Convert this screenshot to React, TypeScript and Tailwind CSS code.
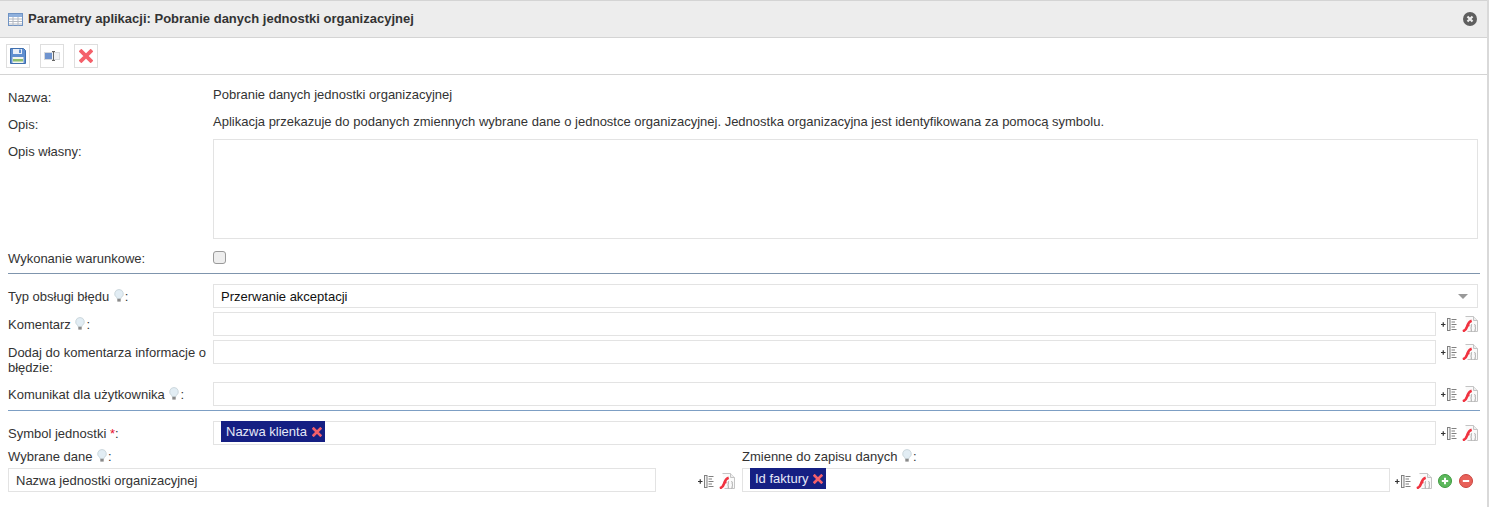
import type { ReactNode } from "react";

function TableIcon() {
  return (
    <svg width="15" height="13" viewBox="0 0 15 13">
      <rect x="0.5" y="0.5" width="14" height="12" fill="#fff" stroke="#6f93c4" />
      <rect x="1" y="1" width="13" height="3" fill="#8fb0dc" />
      <path d="M1 6h13M1 8.500h13M1 11h13M5 4v8.500M10 4v8.500" stroke="#b4b9c2" strokeWidth="1" />
    </svg>
  );
}

function SaveIcon() {
  return (
    <svg width="16" height="16" viewBox="0 0 16 16">
      <path d="M0.500 0.500h13l2 2v13h-15z" fill="#5f8fd0" stroke="#3f6fae" />
      <rect x="3" y="1" width="9" height="5" fill="#e9eff8" />
      <rect x="9" y="1.500" width="2" height="3.500" fill="#5f8fd0" />
      <rect x="2.500" y="9" width="11" height="6" fill="#f3f6ee" />
      <rect x="3" y="11" width="10" height="2.500" fill="#8cbd6e" />
    </svg>
  );
}

function FieldIcon() {
  return (
    <svg width="16" height="12" viewBox="0 0 16 12">
      <rect x="0.500" y="2.500" width="15" height="7" fill="#f0f2f4" stroke="#d6d9dc" />
      <rect x="1" y="3" width="7" height="6" fill="#6f94cf" />
      <path d="M8 1.500h3M9.500 1.500v9M8 10.500h3" stroke="#666" fill="none" />
    </svg>
  );
}

function RedCross({ size }: { size: number }) {
  return (
    <svg width={size} height={size} viewBox="0 0 12 12">
      <path d="M2 2l8 8M10 2l-8 8" stroke="#f4606a" strokeWidth="3.200" strokeLinecap="square" fill="none" />
    </svg>
  );
}

function CloseCircle() {
  return (
    <svg width="14" height="14" viewBox="0 0 14 14">
      <circle cx="7" cy="7" r="7" fill="#5f5f5f" />
      <path d="M4.500 4.500l5 5M9.500 4.500l-5 5" stroke="#eee" strokeWidth="2.200" />
    </svg>
  );
}

function Bulb() {
  return (
    <svg width="12" height="13" viewBox="0 0 12 13" className="inline-block align-[-1px]">
      <path d="M6 0.500a4.300 4.300 0 0 1 2.500 7.800c-.5.400-.6 1-.6 1.400H4.100c0-.4-.1-1-.6-1.400A4.300 4.300 0 0 1 6 .5z" fill="#e2edf4" stroke="#c4d0d6" strokeWidth="0.800" />
      <rect x="4.300" y="9.800" width="3.400" height="2.800" fill="#8a8a8a" />
    </svg>
  );
}

function InsertIcon() {
  return (
    <svg width="16" height="13" viewBox="0 0 16 13">
      <path d="M0 6.500h4.500M2.250 4.200v4.600" stroke="#333" fill="none" strokeWidth="1.200" />
      <rect x="6.500" y="0.500" width="2.500" height="12" fill="#f4f4f4" stroke="#808080" />
      <path d="M10.500 1.500h5M10.500 4h3.500M10.500 6.500h5M10.500 9h3.500M10.500 11.500h5" stroke="#808080" />
    </svg>
  );
}

function FlashDocIcon() {
  return (
    <svg width="16" height="16" viewBox="0 0 16 16">
      <path d="M3.500 0.500h8l4 4v11h-10" fill="#fafafa" stroke="#c4c4c4" />
      <path d="M11.500 0.500v4h4" fill="#eee" stroke="#c4c4c4" />
      <path d="M0.800 15.200c3.500-.8 3.900-3.200 4.600-5.400s1.700-4.400 4.300-5.100" stroke="#f03340" strokeWidth="2.600" fill="none" />
      <path d="M4.500 9.500h3" stroke="#f03340" strokeWidth="1.600" />
      <path d="M10 8.500c-1 0-.7 1-.7 2s-.6 1.500-.6 1.500.6.500.6 1.500-.3 1.500.7 1.500M12.500 8.500c1 0 .7 1 .7 2s.6 1.500.6 1.500-.6.500-.6 1.500.3 1.500-.7 1.500" stroke="#888" fill="none" strokeWidth="0.800" />
    </svg>
  );
}

function RoundButton({ color, edge, plus }: { color: string; edge: string; plus?: boolean }) {
  return (
    <svg width="14" height="14" viewBox="0 0 14 14">
      <circle cx="7" cy="7" r="6.500" fill={color} stroke={edge} />
      {plus && <path d="M7 3.800v6.400" stroke="#fff" strokeWidth="2" />}
      <path d="M3.800 7h6.400" stroke="#fff" strokeWidth="2" />
    </svg>
  );
}

function ToolButton({ children }: { children: ReactNode }) {
  return (
    <button className="flex h-6 w-6 items-center justify-center border border-[#dedede] bg-white">
      {children}
    </button>
  );
}

function VarIcons() {
  return (
    <div className="flex items-center gap-[5px]">
      <InsertIcon />
      <FlashDocIcon />
    </div>
  );
}

function Tag({ label }: { label: string }) {
  return (
    <span className="-mt-[2px] flex h-[21px] items-center gap-[5px] self-start bg-[#151f83] pl-[5px] pr-[3px] text-[#e6e9f8]">
      {label}
      <RedCross size={10} />
    </span>
  );
}

function Box({ children, className }: { children?: ReactNode; className: string }) {
  return (
    <div className={`flex h-6 items-center border border-[#e3e3e3] bg-white pt-px ${className}`}>
      {children}
    </div>
  );
}

function FieldRow({ label, mt, children }: { label: ReactNode; mt: string; children?: ReactNode }) {
  return (
    <div className={`flex items-start ${mt}`}>
      <div className="w-[205px] shrink-0 pt-[5px] leading-[15px]">{label}</div>
      <Box className="w-[1223px] shrink-0 pl-[7px]">{children}</Box>
      <div className="ml-[5px] mt-[4px]">
        <VarIcons />
      </div>
    </div>
  );
}

export default function App() {
  return (
    <div className="h-[507px] w-[1489px] overflow-hidden border-r-2 border-[#d9d9d9] bg-white font-['Liberation_Sans',Arial,sans-serif] text-[13px] text-[#333]">
      <div className="flex h-[38px] items-center justify-between border-y border-[#d4d4d4] bg-[#ededed] pl-2 pr-[10px]">
        <div className="flex items-center gap-[5px] font-bold text-[#333]">
          <TableIcon />
          <span>Parametry aplikacji: Pobranie danych jednostki organizacyjnej</span>
        </div>
        <CloseCircle />
      </div>

      <div className="flex h-[37px] items-center gap-[10px] border-b border-[#d4d4d4] pl-[6px]">
        <ToolButton>
          <SaveIcon />
        </ToolButton>
        <ToolButton>
          <FieldIcon />
        </ToolButton>
        <ToolButton>
          <RedCross size={14} />
        </ToolButton>
      </div>

      <div className="pl-2 pt-[12px] leading-4">
        <div className="flex h-[27px]">
          <div className="w-[205px] pt-[3px]">Nazwa:</div>
          <div>Pobranie danych jednostki organizacyjnej</div>
        </div>
        <div className="flex h-[27px]">
          <div className="w-[205px] pt-[3px]">Opis:</div>
          <div>Aplikacja przekazuje do podanych zmiennych wybrane dane o jednostce organizacyjnej. Jednostka organizacyjna jest identyfikowana za pomocą symbolu.</div>
        </div>
        <div className="flex">
          <div className="w-[205px] pt-[3px]">Opis własny:</div>
          <div className="-mt-[2px] h-[100px] w-[1265px] border border-[#e3e3e3]" />
        </div>

        <div className="mt-[12px] flex h-[23px] w-[1472px] border-b border-[#7f95ad]">
          <div className="w-[205px]">Wykonanie warunkowe:</div>
          <div className="h-[13px] w-[13px] rounded-[3px] border border-[#9a9a9a] bg-[#eeeeee]" />
        </div>

        <div className="mt-[10px] flex">
          <div className="w-[205px] pt-[5px]">
            Typ obsługi błędu <Bulb />:
          </div>
          <Box className="relative w-[1265px] pl-[7px] text-[#111]">
            Przerwanie akceptacji
            <span className="absolute right-[9px] top-[9px] h-0 w-0 border-x-[5px] border-t-[5px] border-x-transparent border-t-[#999]" />
          </Box>
        </div>

        <FieldRow mt="mt-1" label={<>Komentarz <Bulb />:</>} />
        <FieldRow mt="mt-1" label="Dodaj do komentarza informacje o błędzie:" />
        <FieldRow mt="mt-[7px]" label={<>Komunikat dla użytkownika <Bulb />:</>} />

        <div className="mt-1 h-px w-[1472px] bg-[#7d9fc4]" />

        <FieldRow
          mt="mt-[10px]"
          label={
            <>
              Symbol jednostki <span className="text-[#e8112d]">*</span>:
            </>
          }
        >
          <Tag label="Nazwa klienta" />
        </FieldRow>

        <div className="mt-[3px] flex">
          <div className="w-[734px]">
            <div className="pb-[3px] pt-px leading-4">
              Wybrane dane <Bulb />:
            </div>
            <div className="flex items-start">
              <Box className="w-[648px] pl-[7px]">Nazwa jednostki organizacyjnej</Box>
              <div className="ml-[42px] mt-[5px]">
                <VarIcons />
              </div>
            </div>
          </div>
          <div>
            <div className="pb-[3px] pt-px leading-4">
              Zmienne do zapisu danych <Bulb />:
            </div>
            <div className="flex items-start">
              <Box className="w-[648px] pl-[7px]">
                <Tag label="Id faktury" />
              </Box>
              <div className="ml-[5px] mt-[5px] flex items-center gap-[6px]">
                <VarIcons />
                <RoundButton color="#5cb85c" edge="#3f9a3f" plus />
                <span className="ml-px">
                  <RoundButton color="#e8615a" edge="#c9453f" />
                </span>
              </div>
            </div>
          </div>
        </div>
      </div>
    </div>
  );
}
